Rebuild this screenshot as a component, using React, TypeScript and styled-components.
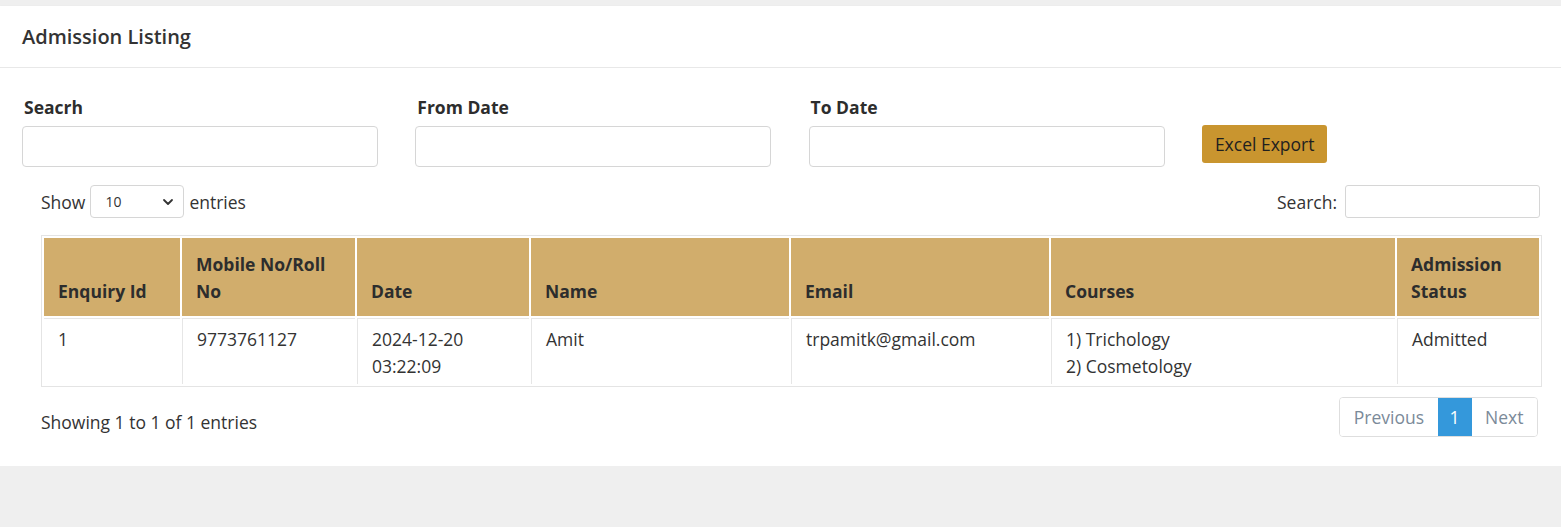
import React from 'react';
import styled, { createGlobalStyle } from 'styled-components';

const GlobalStyle = createGlobalStyle`
  html, body {
    margin: 0;
    padding: 0;
    background: #efefef;
  }
  body {
    font-family: "Open Sans", "Liberation Sans", sans-serif;
    color: #333;
  }
`;

const Page = styled.div`
  padding-top: 6px;
`;

const Card = styled.div`
  background: #fff;
  box-shadow: 0 1px 2px rgba(0, 0, 0, 0.14);
`;

const CardHeader = styled.div`
  height: 62px;
  box-sizing: border-box;
  padding: 0 22px;
  display: flex;
  align-items: center;
  border-bottom: 1px solid #e8e8e8;

  h4 {
    margin: 0;
    font-size: 20px;
    font-weight: 600;
    color: #333;
  }
`;

const CardBody = styled.div`
  padding: 26px 21px 29px 22px;
`;

const FilterRow = styled.div`
  display: grid;
  grid-template-columns: repeat(3, 356px) auto;
  column-gap: 37.3px;
  align-items: end;
`;

const Field = styled.div`
  display: flex;
  flex-direction: column;
`;

const Label = styled.label`
  font-size: 17.5px;
  font-weight: 700;
  color: #2d2d2d;
  padding-left: 2px;
  line-height: 26px;
  margin-bottom: 6px;
`;

const Input = styled.input`
  height: 41px;
  box-sizing: border-box;
  border: 1px solid #d6d6d6;
  border-radius: 4px;
  font-family: inherit;
  font-size: 16px;
  padding: 6px 12px;
  outline: none;
`;

const ExportButton = styled.button`
  justify-self: start;
  height: 38px;
  margin-bottom: 4px;
  padding: 0 13px;
  background: #c9952f;
  border: none;
  border-radius: 3px;
  color: #1f1f1f;
  font-family: inherit;
  font-size: 17.5px;
  cursor: pointer;
`;

const TableArea = styled.div`
  padding-left: 19px;
  margin-top: 18px;
`;

const TopBar = styled.div`
  display: flex;
  justify-content: space-between;
  align-items: center;
  font-size: 17.5px;
  color: #333;
`;

const Inline = styled.label`
  display: flex;
  align-items: center;
  gap: 5px;
  line-height: 24px;
`;

const SearchLabel = styled(Inline)`
  gap: 8px;
`;

const SelectWrap = styled.div`
  position: relative;
  width: 94px;
  height: 33px;

  svg {
    position: absolute;
    right: 10px;
    top: 11px;
    pointer-events: none;
  }
`;

const Select = styled.select`
  appearance: none;
  width: 100%;
  height: 100%;
  box-sizing: border-box;
  border: 1px solid #d6d6d6;
  border-radius: 4px;
  background: #fff;
  font-family: inherit;
  font-size: 14px;
  color: #333;
  padding: 0 14px;
`;

const SearchInput = styled.input`
  width: 195px;
  height: 33px;
  box-sizing: border-box;
  border: 1px solid #d6d6d6;
  border-radius: 3px;
  outline: none;
`;

const Table = styled.table`
  box-sizing: border-box;
  width: 1499px;
  margin-top: 17px;
  table-layout: fixed;
  border-collapse: separate;
  border-spacing: 2px;
  border: 1px solid #e4e4e4;
  font-size: 17.5px;
  line-height: 27px;
`;

const Th = styled.th<{ $w: number }>`
  box-sizing: border-box;
  width: ${(p) => p.$w}px;
  background: #d1ad6c;
  text-align: left;
  vertical-align: bottom;
  font-weight: 700;
  color: #2d2d2d;
  padding: 13px 14px 11px;
`;

const Td = styled.td`
  vertical-align: top;
  padding: 7px 14px 4px;
  border-top: 1px solid #e6e6e6;
  color: #333;

  & + & {
    border-left: 1px solid #e6e6e6;
  }
`;

const Footer = styled.div`
  display: flex;
  justify-content: space-between;
  align-items: center;
  margin-top: 10px;
  font-size: 17.5px;
  padding-right: 2px;
`;

const Info = styled.span`
  padding-top: 9px;
`;

const Pager = styled.div`
  display: flex;
  border: 1px solid #dedede;
  border-radius: 4px;
  overflow: hidden;
  height: 40px;
  box-sizing: border-box;
`;

const PageBtn = styled.span<{ $active?: boolean }>`
  display: flex;
  align-items: center;
  padding: 0 ${(p) => (p.$active ? 12 : 13.5)}px;
  padding-bottom: 1px;
  font-size: 17.5px;
  color: ${(p) => (p.$active ? '#fff' : '#7b8a99')};
  background: ${(p) => (p.$active ? '#3498db' : '#fff')};
`;

const columns = [
  { title: 'Enquiry Id', w: 136 },
  { title: 'Mobile No/Roll No', w: 173 },
  { title: 'Date', w: 172 },
  { title: 'Name', w: 258 },
  { title: 'Email', w: 258 },
  { title: 'Courses', w: 344 },
  { title: 'Admission Status', w: 142 },
];

const App: React.FC = () => {
  return (
    <Page>
      <GlobalStyle />
      <Card>
        <CardHeader>
          <h4>Admission Listing</h4>
        </CardHeader>
        <CardBody>
          <FilterRow>
            <Field>
              <Label>Seacrh</Label>
              <Input type="text" />
            </Field>
            <Field>
              <Label>From Date</Label>
              <Input type="text" />
            </Field>
            <Field>
              <Label>To Date</Label>
              <Input type="text" />
            </Field>
            <ExportButton>Excel Export</ExportButton>
          </FilterRow>

          <TableArea>
            <TopBar>
              <Inline>
                Show
                <SelectWrap>
                  <Select defaultValue="10">
                    <option>10</option>
                    <option>25</option>
                    <option>50</option>
                    <option>100</option>
                  </Select>
                  <svg width="12" height="12" viewBox="0 0 12 12">
                    <path d="M2 4 L6 8 L10 4" fill="none" stroke="#333" strokeWidth="1.8" strokeLinecap="round" strokeLinejoin="round" />
                  </svg>
                </SelectWrap>
                entries
              </Inline>
              <SearchLabel>
                Search:
                <SearchInput type="search" />
              </SearchLabel>
            </TopBar>

            <Table>
              <thead>
                <tr>
                  {columns.map((c) => (
                    <Th key={c.title} $w={c.w}>{c.title}</Th>
                  ))}
                </tr>
              </thead>
              <tbody>
                <tr>
                  <Td>1</Td>
                  <Td>9773761127</Td>
                  <Td>2024-12-20<br />03:22:09</Td>
                  <Td>Amit</Td>
                  <Td>trpamitk@gmail.com</Td>
                  <Td>1) Trichology<br />2) Cosmetology</Td>
                  <Td>Admitted</Td>
                </tr>
              </tbody>
            </Table>

            <Footer>
              <Info>Showing 1 to 1 of 1 entries</Info>
              <Pager>
                <PageBtn>Previous</PageBtn>
                <PageBtn $active>1</PageBtn>
                <PageBtn>Next</PageBtn>
              </Pager>
            </Footer>
          </TableArea>
        </CardBody>
      </Card>
    </Page>
  );
};

export default App;
